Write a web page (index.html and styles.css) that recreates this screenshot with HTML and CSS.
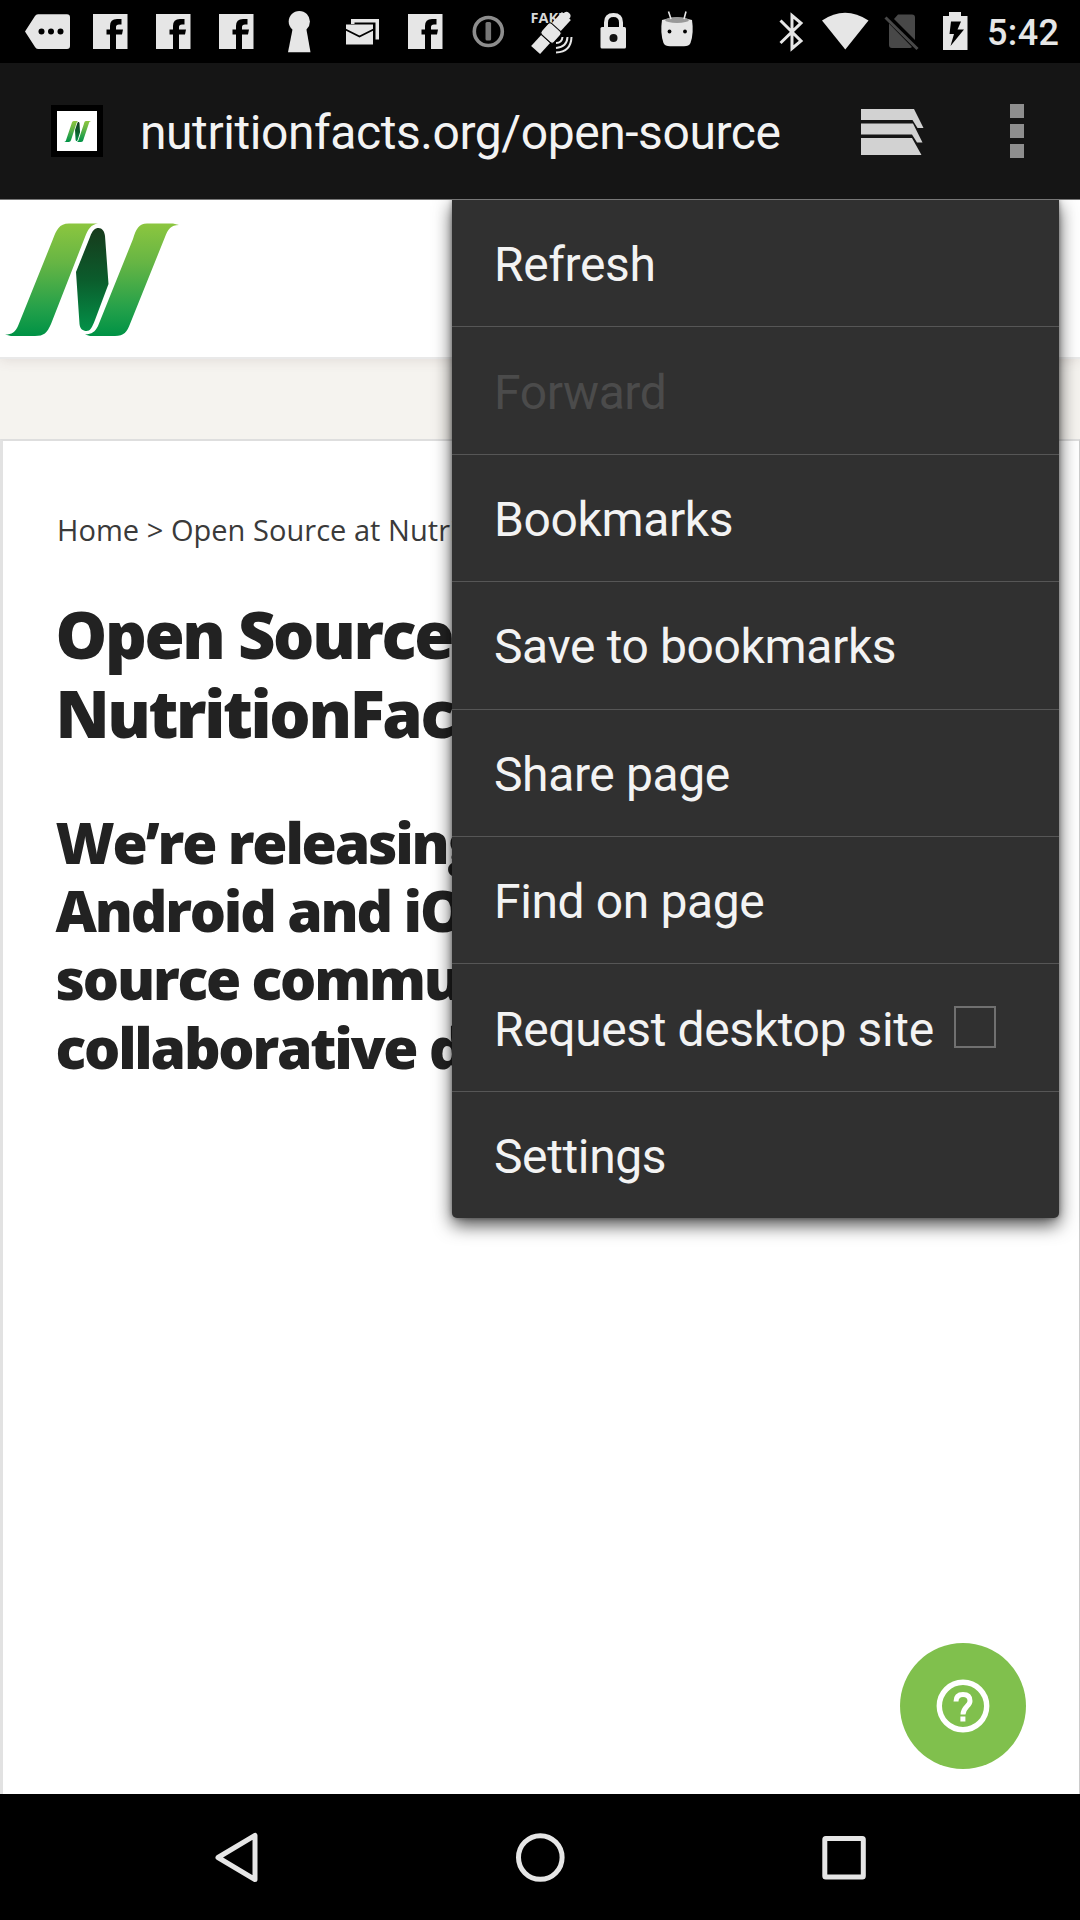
FILE: index.html
```html
<!DOCTYPE html>
<html lang="en">
<head>
<meta charset="utf-8">
<title>Open Source at NutritionFacts.org</title>
<link rel="stylesheet" href="styles.css">
</head>
<body>
<svg width="0" height="0" class="defs" aria-hidden="true">
  <defs>
    <linearGradient id="leaf" x1="0" y1="0" x2="0" y2="1"><stop offset="0" stop-color="#8cc63f"/><stop offset=".35" stop-color="#66b544"/><stop offset=".75" stop-color="#25a14a"/><stop offset="1" stop-color="#009245"/></linearGradient>
    <linearGradient id="stem" x1="0" y1="0" x2="0" y2="1"><stop offset="0" stop-color="#173a1c"/><stop offset=".5" stop-color="#0b5c2c"/><stop offset="1" stop-color="#039148"/></linearGradient>
    <symbol id="brand" viewBox="0 0 190 158">
      <path fill="url(#leaf)" d="M5 139.500C12 139.500 15.500 137 18 131L53 44C56.500 35 59 28.500 69 28.500H98C91 29.500 88 34 85 42L51 129C47 138 44 141 35 141H11Z"/>
      <path fill="url(#leaf)" d="M85 139.500C92 139 95 137 98 131L133 44C136 34 139 28.500 147 28.500H173L179 30C171 30 168 34 165 42L130 129C127 137 124 141 115 141H90Z"/>
      <path fill="url(#stem)" d="M76 77L90 42C92.500 35 95 33 98.500 33C102 33 104.500 36 105 41L108.500 89L95 125C92 133 90 136 86.500 136C83 136 80 134 79.500 129Z"/>
    </symbol>
    <symbol id="fb" viewBox="0 0 63 63">
      <path d="M14 14H48.500V49H37V34.500H43L44 29.500H37V27Q37 24.500 40 24.500H42.500V19H38Q31 19 31 26V29.500H27.500V34.500H31V49H14Z"/>
    </symbol>
  </defs>
</svg>
<div class="screen">
  <header class="status">
    <div class="notifications">
      <svg class="slot" viewBox="16 0 63 63"><path d="M25 31.500L35 16Q36 14.300 38 14.300H67Q70 14.300 70 17.300V46Q70 49 67 49H38Q36 49 35 47Z"/><g fill="#000"><circle cx="41.500" cy="31.500" r="3"/><circle cx="51" cy="31.500" r="3"/><circle cx="60.500" cy="31.500" r="3"/></g></svg>
      <svg class="slot"><use href="#fb"/></svg>
      <svg class="slot"><use href="#fb"/></svg>
      <svg class="slot"><use href="#fb"/></svg>
      <svg class="slot" viewBox="268 0 63 63"><circle cx="299.300" cy="21.500" r="10.600"/><path d="M293 27H306L310.500 52.300H288Z"/></svg>
      <svg class="slot" viewBox="331 0 63 63"><path d="M351 19H379V39.500H375.500V22.500H354.500V24H351Z"/><path d="M346 24.500H373V44.500H346Z"/><path d="M345.500 29.500L359.500 36.500L373.500 29.500" fill="none" stroke="#000" stroke-width="1.800"/></svg>
      <svg class="slot"><use href="#fb"/></svg>
      <svg class="slot" viewBox="457 0 63 63"><circle cx="488.300" cy="31.500" r="14" fill="none" stroke="#8d8d8d" stroke-width="3.600"/><rect x="485.500" y="22" width="5.600" height="18.500" rx="1.500" fill="#777"/></svg>
      <svg class="slot" viewBox="520 0 63 63"><text class="tag" x="530.500" y="23">FAKE</text><g transform="rotate(-48 551 33)"><rect x="528" y="27" width="15" height="12"/><rect x="543.500" y="24.500" width="15" height="17" rx="3" stroke="#000"/><rect x="559" y="27" width="15" height="12"/><circle cx="574" cy="33" r="4"/></g><path d="M556 43Q562 43 562.500 37M556 48Q567 47 567.500 37M556 52.500Q571 52 571.500 37" fill="none" stroke="#e6e6e6" stroke-width="2"/></svg>
      <svg class="slot" viewBox="583 0 63 63"><path d="M606 29V22.500Q606 15 613.500 15T621 22.500V29" fill="none" stroke="#e6e6e6" stroke-width="4"/><rect x="600.500" y="27" width="25.500" height="21.500" rx="1.500"/><circle cx="613.500" cy="38" r="4" fill="#111"/></svg>
      <svg class="slot" viewBox="646 0 63 63"><path d="M662 20Q677 15 692 20Q694 33 690.500 43Q689 46.200 684 46.200H670Q665 46.200 663.500 43Q660 33 662 20Z"/><ellipse cx="677" cy="20" rx="12" ry="3" fill="#999"/><path d="M668.500 11.500L671 19M686 11.500L684 19" stroke="#e6e6e6" stroke-width="1.600"/><circle cx="669.500" cy="31.500" r="1.900" fill="#000"/><circle cx="685" cy="31.500" r="1.900" fill="#000"/></svg>
    </div>
    <div class="system">
      <svg width="50" height="63" viewBox="766 0 50 63"><path d="M780.500 20.500L801 41L792 48.500V15.500L801 23L780.500 43" fill="none" stroke="#e6e6e6" stroke-width="3"/></svg>
      <svg width="60" height="63" viewBox="816 0 60 63"><path d="M822 20.500Q845 5 868.500 20.500L845.300 49.500Z"/></svg>
      <svg width="60" height="63" viewBox="876 0 60 63"><path fill="#484848" d="M898 14.500H912Q915 14.500 915 17.500V40L894 19ZM889 23.500L912 47Q911 48 910 48H892Q889 48 889 45Z"/><path d="M885.500 17.500L917.500 49" stroke="#484848" stroke-width="3"/></svg>
      <svg width="47" height="63" viewBox="936 0 47 63"><path d="M949 12H961V16H967.500V50H943V16H949Z"/><path fill="#000" d="M951 21.500H961L957.500 29.500H964L950.500 46L954 34H949.500Z"/></svg>
      <span class="clock">5:42</span>
    </div>
  </header>

  <div class="toolbar">
    <span class="favicon"><svg width="27" height="21" viewBox="5 28 174 113" preserveAspectRatio="none"><use href="#brand" width="190" height="158"/></svg></span>
    <span class="url">nutritionfacts.org/open-source</span>
    <svg class="tabs" width="63" height="48" viewBox="0 0 63 48"><path d="M0 1H53L62.500 20H56.500L51.500 12H0ZM0 15.500H52L61.500 34.500H56L51 26.500H0ZM0 30H51L60.500 47H0Z"/></svg>
    <span class="more"><i></i><i></i><i></i></span>
  </div>

  <main class="page">
    <div class="masthead"><svg width="190" height="158"><use href="#brand"/></svg></div>
    <div class="band"></div>
    <article class="card">
      <p class="crumbs">Home &gt; Open Source at Nutri</p>
      <h1>Open Source<br>NutritionFac</h1>
      <h2>We’re releasing<br>Android and iO<br>source commu<br>collaborative d</h2>
    </article>
    <ul class="menu">
      <li>Refresh</li>
      <li class="off">Forward</li>
      <li>Bookmarks</li>
      <li>Save to bookmarks</li>
      <li>Share page</li>
      <li>Find on page</li>
      <li><span class="grow">Request desktop site</span><span class="box"></span></li>
      <li>Settings</li>
    </ul>
    <div class="help"><svg width="54" height="54" viewBox="0 0 54 54"><circle cx="27" cy="27" r="23.700" fill="none" stroke="#fff" stroke-width="5.400"/><path d="M20 22.500Q20 15.500 27 15.500T34 22C34 27 27 28 27 35.500" fill="none" stroke="#fff" stroke-width="5"/><rect x="24.400" y="37.500" width="5" height="5" fill="#fff"/></svg></div>
  </main>

  <nav class="keys">
    <svg viewBox="0 0 54 54"><path d="M45 5.500V49.500L8 27.500Z"/></svg>
    <svg viewBox="0 0 54 54"><circle cx="27.300" cy="27.500" r="21.800"/></svg>
    <svg viewBox="0 0 54 54"><rect x="8.800" y="8.500" width="38.500" height="38.500" rx="1"/></svg>
  </nav>
</div>
</body>
</html>
```
FILE: styles.css
```css
* { box-sizing: border-box; }
body { margin: 0; background: #000; }
.defs { position: absolute; }
.screen {
  width: 1080px;
  height: 1920px;
  display: flex;
  flex-direction: column;
  overflow: hidden;
  font-family: Roboto, "Liberation Sans", sans-serif;
}
svg { display: block; flex: none; }

.status {
  height: 63px;
  flex: none;
  display: flex;
  justify-content: space-between;
  padding: 0 22px 0 16px;
  background: #000;
  fill: #e6e6e6;
}
.notifications, .system { display: flex; }
.slot { width: 63px; height: 63px; }
.tag { font: bold 14.500px "Open Sans", sans-serif; fill: #d8d8d8; }
.clock {
  width: 75px;
  padding-left: 4px;
  font-size: 36px;
  font-weight: 500;
  line-height: 67px;
  letter-spacing: .4px;
  color: #e6e6e6;
}

.toolbar {
  height: 137px;
  flex: none;
  display: flex;
  align-items: center;
  padding: 0 56px 0 51px;
  background: #151515;
  border-bottom: 1px solid #777;
}
.favicon {
  width: 52px;
  height: 52px;
  border: 6px solid #000;
  background: #fff;
  display: flex;
  align-items: center;
  justify-content: center;
}
.url {
  flex: 1;
  padding: 4px 0 0 37px;
  font-size: 48px;
  line-height: 56px;
  letter-spacing: -.43px;
  color: #f3f3f3;
  white-space: nowrap;
}
.tabs { fill: #d2d2d2; margin: 2px 86px 0 0; }
.more { display: flex; flex-direction: column; gap: 6px; }
.more i { width: 14px; height: 14px; background: #8e8e8e; }

.page {
  flex: 1;
  position: relative;
  overflow: hidden;
  display: flex;
  flex-direction: column;
  background: #f5f3ef;
}
.masthead {
  height: 159px;
  flex: none;
  background: #fff;
  border-bottom: 2px solid #e9e9e9;
  box-shadow: 0 1px 12px rgba(90, 60, 60, .13);
}
.masthead svg { margin-top: -5px; }
.band { height: 80px; flex: none; }
.card {
  flex: 1;
  padding: 69px 0 0 54px;
  background: #fff;
  border-top: 2px solid #dedede;
  border-left: 3px solid #e2e2e2;
  border-right: 1px solid #ccc;
  font-family: "Open Sans", sans-serif;
  color: #222;
  white-space: nowrap;
}
.crumbs { margin: 0; font-size: 29px; line-height: 40px; letter-spacing: .04px; color: #3a3a3a; }
h1 { margin: 45px 0 0 -1.500px; font-size: 65px; line-height: 78.500px; font-weight: 800; letter-spacing: -2.350px; }
h2 { margin: 56px 0 0 -1.500px; font-size: 57px; line-height: 68.200px; font-weight: 800; letter-spacing: -2.200px; }

.menu {
  position: absolute;
  top: -1px;
  left: 452px;
  width: 607px;
  margin: 0;
  padding: 0;
  list-style: none;
  background: #303030;
  border-radius: 0 0 5px 5px;
  box-shadow: 0 7px 18px rgba(0, 0, 0, .7), 0 0 5px rgba(0, 0, 0, .35);
  font-size: 48px;
  line-height: 56px;
  letter-spacing: -.38px;
  color: #f3f3f3;
}
.menu li {
  height: 127.400px;
  display: flex;
  align-items: center;
  padding: 4px 63px 0 42px;
  border-top: 1px solid #565656;
  white-space: nowrap;
}
.menu .off { color: #4b4b4b; }
.grow { flex: 1; }
.box { width: 42px; height: 42px; margin-top: -5px; border: 2px solid #707070; }

.help {
  position: absolute;
  right: 54px;
  bottom: 25px;
  width: 126px;
  height: 126px;
  border-radius: 50%;
  background: #80c04d;
  display: flex;
  align-items: center;
  justify-content: center;
}

.keys {
  height: 126px;
  flex: none;
  display: flex;
  justify-content: space-between;
  align-items: center;
  padding: 0 210px;
  background: #000;
}
.keys svg { width: 54px; height: 54px; fill: none; stroke: #e6e6e6; stroke-width: 5; stroke-linejoin: round; }
```
